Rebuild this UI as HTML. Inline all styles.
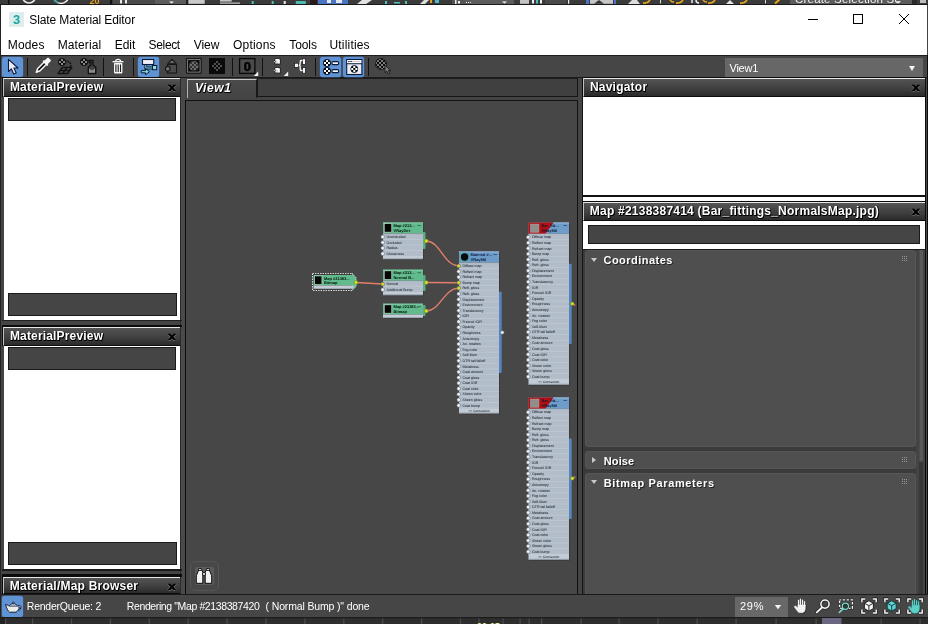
<!DOCTYPE html>
<html><head><meta charset="utf-8"><title>Slate Material Editor</title>
<style>
*{box-sizing:border-box;margin:0;padding:0}
html,body{width:928px;height:624px;overflow:hidden;background:#444}
body{position:relative;will-change:transform;font-family:"Liberation Sans",sans-serif;font-size:12px;color:#fff}
.abs,.abs>*{position:absolute}
svg{position:absolute;overflow:visible}
#nodes{filter:blur(.3px)}
#nodes text{font-family:"Liberation Sans",sans-serif;font-size:12px;text-rendering:geometricPrecision}
/* background app strips */
#topstrip{left:0;top:0;width:928px;height:5px;background:#3b3b3b;overflow:hidden}
#botstrip{left:0;top:617px;width:928px;height:7px;background:#2d2d2d;overflow:hidden}
#win{left:0;top:5px;width:928px;height:612px;background:#444;border-left:1px solid #222}
/* title + menu */
#title{left:1px;top:5px;width:926px;height:50px;background:#fff;color:#000}
#title span{white-space:nowrap;font-size:12px;line-height:14px}
#appicon{left:8px;top:7px;width:15px;height:15px;background:#dfeeed;color:#17a4a4;font-weight:bold;font-size:13px!important;line-height:15px!important;text-align:center}
#toolbar{left:1px;top:55px;width:927px;height:23px;background:#464646;border-top:1px solid #1e1e1e;border-bottom:1px solid #1a1a1a}
.sep{width:1px;height:18px;top:1.500px;background:#111}
.btn{width:21px;height:20px;top:0.500px;background:#6093d3;border-radius:2.500px;box-shadow:0 0 0 .5px #3c5c8c}
/* panel headers */
.hdr{position:absolute;height:19px;background:linear-gradient(#585858 0,#4f4f4f 12%,#404040 55%,#2b2b2b 100%);border-top:1px solid #e6e6e6;border-left:1px solid #c0c0c0;border-bottom:1px solid #0c0c0c;box-shadow:-1px 0 0 #0c0c0c,0 -1px 0 #0c0c0c}
.ht{position:absolute;top:80px;font-weight:bold;font-size:12px;line-height:14px;color:#fff;text-shadow:1px 1px 0 #000,0 1px 0 #000,1px 0 0 #222;white-space:nowrap}
.hx{position:absolute;font-weight:bold;font-size:11px;line-height:14px;color:#000;-webkit-text-stroke:.6px #000;transform:scaleX(1.27);transform-origin:0 50%;text-shadow:0 1px 0 #8a8a8a,1px 0 0 #666,-1px 0 0 #666}
.white{position:absolute;background:#fff}
.dk{position:absolute;background:#454545;border:1px solid #1a1a1a}
#canvas{left:185px;top:100px;width:393px;height:495px;background:#474747;border:1px solid #121212;border-left:1.600px solid #0c0c0c;overflow:hidden}
#status{left:1px;top:594px;width:927px;height:23px;background:#464646;border-top:1px solid #1a1a1a}
.st{position:absolute;white-space:nowrap;font-size:11px;line-height:14px;top:599px;color:#fff}
.roll{position:absolute;left:585px;width:331px;background:#4f4f4f;border:1px solid #575757;border-radius:3px}
.rt{position:absolute;font-weight:bold;font-size:11px;line-height:14px;color:#fff;text-shadow:1px 1px 0 #222;white-space:nowrap}
.tri{position:absolute;width:0;height:0;border:3.500px solid transparent}
.grip{position:absolute;left:902px;width:5px;height:5px;background:radial-gradient(circle at .5px .5px,#999 .55px,transparent .7px) 0 0/2px 2px}
#t0{left:28.3px!important;top:8px!important;letter-spacing:-0.11px}
#m1{left:6.8px!important;top:33px!important;letter-spacing:0.16px}
#m2{left:56.7px!important;top:33px!important;letter-spacing:0.12px}
#m3{left:113.7px!important;top:33px!important;letter-spacing:0px}
#m4{left:147.6px!important;top:33px!important;letter-spacing:-0.35px}
#m5{left:192.8px!important;top:33px!important;letter-spacing:-0.07px}
#m6{left:232.1px!important;top:33px!important;letter-spacing:0.17px}
#m7{left:288.3px!important;top:33px!important;letter-spacing:-0.1px}
#m8{left:328.5px!important;top:33px!important;letter-spacing:0.18px}
#h1{left:9.9px!important;top:80px!important;letter-spacing:0.17px}
#h2{left:9.9px!important;top:329px!important;letter-spacing:0.17px}
#h3{left:9.8px!important;top:579px!important;letter-spacing:0.22px}
#h4{left:194.9px!important;top:81px!important;letter-spacing:0.61px}
#h5{left:589.9px!important;top:80px!important;letter-spacing:0.23px}
#h6{left:589.8px!important;top:204px!important;letter-spacing:0.23px}
#s1{left:26.8px!important;top:599px!important;letter-spacing:-0.24px}
#s2{left:126.8px!important;top:599px!important;letter-spacing:-0.39px}
#s2b{left:265.6px!important;top:599px!important;letter-spacing:-0.15px}
#s3{left:739.9px!important;top:599px!important;letter-spacing:0.84px}
#dd1{left:729.5px!important;top:61px!important;letter-spacing:-0.24px}
#r1{left:603.5px!important;top:253px!important;letter-spacing:0.47px}
#r2{left:603.8px!important;top:454px!important;letter-spacing:0.11px}
#r3{left:603.8px!important;top:476px!important;letter-spacing:0.63px}
#x1{left:167.6px!important;top:79.7px!important;letter-spacing:0px}
#x2{left:167.6px!important;top:328.8px!important;letter-spacing:0px}
#x3{left:167.6px!important;top:578.5px!important;letter-spacing:0px}
#x5{left:912px!important;top:80px!important;letter-spacing:0px}
#x6{left:912px!important;top:204px!important;letter-spacing:0px}
</style></head><body>
<div id="topstrip" class="abs"><svg style="left:0;top:0" width="928" height="5" viewBox="0 0 928 5">
<rect x="8" y="0" width="1.5" height="5" fill="#111"/>
<rect x="110" y="0" width="2" height="5" fill="#111"/>
<rect x="113" y="0" width="42" height="5" fill="#4a4a4a"/>
<rect x="120" y="0" width="2" height="3.5" fill="#e8e8e8"/>
<rect x="125" y="0" width="2" height="3.5" fill="#e8e8e8"/>
<rect x="155" y="0" width="31" height="5" fill="#5c5c5c"/>
<rect x="186" y="0" width="2" height="5" fill="#222"/>
<rect x="188.4" y="0" width="16.3" height="3.8" fill="#c9c9c9"/>
<rect x="220" y="0" width="11.7" height="1.6" fill="#c4c4c4"/>
<rect x="220" y="2.6" width="20" height="1" fill="#e0e0e0"/>
<rect x="251.7" y="1" width="2" height="3" fill="#4fc0b8"/>
<rect x="271.7" y="1" width="2" height="3" fill="#4fc0b8"/>
<rect x="283.7" y="1" width="2" height="3" fill="#f0f0f0"/>
<rect x="295.8" y="1" width="10" height="3" fill="#4fb8b0"/>
<rect x="310" y="0" width="7" height="5" fill="#2a1a1a"/>
<rect x="318" y="0" width="30" height="5" fill="#4a74c4"/>
<rect x="327" y="0" width="4" height="3" fill="#e8e8f0"/>
<rect x="336" y="0" width="6" height="3" fill="#e8e8f0"/>
<rect x="385" y="1" width="2" height="3" fill="#4fc0b8"/>
<rect x="394" y="2" width="6" height="1.5" fill="#4fc0b8"/>
<rect x="405" y="1" width="2" height="3" fill="#4fc0b8"/>
<rect x="430" y="0" width="2" height="3" fill="#e8a020"/>
<rect x="435" y="0" width="4" height="3" fill="#4fb8c8"/>
<rect x="452" y="0" width="13" height="5" fill="#555"/>
<rect x="455" y="0" width="1.5" height="4" fill="#eee"/>
<rect x="458" y="1" width="2" height="2.5" fill="#eee"/>
<rect x="465" y="0" width="49" height="5" fill="#5c5c5c"/>
<rect x="466" y="2" width="1" height="1" fill="#eee"/>
<rect x="468" y="2" width="1" height="1" fill="#eee"/>
<rect x="470" y="2" width="1" height="1" fill="#eee"/>
<rect x="520" y="0" width="9" height="3.8" fill="#c4c4c4"/>
<rect x="532" y="0" width="2" height="3.5" fill="#f0f0f0"/>
<rect x="536" y="0" width="2" height="3.5" fill="#4fc0b8"/>
<rect x="540" y="0" width="2" height="3.5" fill="#f0f0f0"/>
<rect x="545" y="0" width="21" height="5" fill="#4a4a4a"/>
<rect x="568" y="0" width="1.2" height="3.8" fill="#f0f0f0"/>
<rect x="586" y="0" width="3" height="4" fill="#4a74c4"/>
<rect x="590" y="0" width="23" height="3.8" fill="#c6c6c6"/>
<rect x="614" y="0" width="2" height="4" fill="#4a74c4"/>
<rect x="660" y="0" width="1" height="3.5" fill="#ddd"/>
<rect x="765" y="0" width="1" height="3.5" fill="#ddd"/>
<rect x="790" y="0" width="122" height="5" fill="#5c5c5c"/>
<rect x="912" y="0" width="5" height="5" fill="#2a2a2a"/>
<rect x="920" y="0" width="6" height="3" fill="#bbb"/>
<circle cx="29" cy="-3.5" r="6.5" fill="none" stroke="#eee" stroke-width="1.6"/>
<circle cx="61" cy="-4" r="7.5" fill="none" stroke="#eee" stroke-width="1.6"/>
<path d="M53.500-2a7.500 7.500 0 0 0 5 5" fill="none" stroke="#3aa89a" stroke-width="1.800"/>
<text x="89.500" y="3.500" font-size="9" font-weight="bold" fill="#e8a020" font-family="Liberation Sans,sans-serif">20</text>
<path d="M169 1.600h5l-2.500 2z" fill="#f4f4f4"/>
<path d="M357 4l5-4h10l-6 4z" fill="#e4e4e4"/>
<path d="M420 4l4-4h5l-4 4z" fill="#ddd"/>
<path d="M502 1.600h5l-2.500 2z" fill="#f4f4f4"/>
<path d="M594 3.800l5-3.800 5 3.800z" fill="#333"/>
<path d="M628 4l4-4h5l3 4z" fill="#ddd"/>
<path d="M643 3.200c4 0 6.500-1.500 7-4" fill="none" stroke="#e8a81c" stroke-width="1.700"/>
<path d="M676 3.200c4 0 6.500-1.500 7-4" fill="none" stroke="#e8a81c" stroke-width="1.700"/>
<path d="M708 3.200c4 0 6.500-1.500 7-4" fill="none" stroke="#e8a81c" stroke-width="1.700"/>
<path d="M740 3.200c4 0 6.500-1.500 7-4" fill="none" stroke="#e8a81c" stroke-width="1.700"/>
<path d="M670 0c1 1.500 2.500 2 4 2M703 0c1 1.500 2.500 2 4 2" fill="none" stroke="#e8a81c" stroke-width="1.400"/>
<path d="M692 0v3M696 0c0 2 1 3 3 3" fill="none" stroke="#eee" stroke-width="1.500"/>
<path d="M726 4l4-4 4 4z" fill="#e4e4e4"/>
<path d="M775 3.500l4.500-4" stroke="#e8a81c" stroke-width="2"/>
<path d="M895 1.200h6l-3 2.400z" fill="#f4f4f4"/>
</svg>
<span style="left:795px;top:-8px;font-size:11.500px;line-height:14px;white-space:nowrap;color:#f0f0f0;letter-spacing:.2px">Create Selection Se</span>
<div style="left:0;top:4px;width:928px;height:1px;background:#1a1a1a"></div></div>
<div id="win" class="abs"></div>
<div id="title" class="abs">
<span id="appicon">3</span>
<span id="t0" style="left:29px;top:8px">Slate Material Editor</span>
<span id="m1" style="left:7px;top:33px">Modes</span>
<span id="m2" style="left:57px;top:33px">Material</span>
<span id="m3" style="left:114px;top:33px">Edit</span>
<span id="m4" style="left:148px;top:33px">Select</span>
<span id="m5" style="left:193px;top:33px">View</span>
<span id="m6" style="left:232px;top:33px">Options</span>
<span id="m7" style="left:288px;top:33px">Tools</span>
<span id="m8" style="left:329px;top:33px">Utilities</span>
<svg style="left:806px;top:8px" width="110" height="14" viewBox="0 0 110 14" fill="none" stroke="#000" stroke-width="1">
<path d="M1 6.5h10"/><rect x="46.5" y="1.500" width="9" height="9"/><path d="M92 1l10 10M102 1l-10 10"/></svg>
</div>
<div id="toolbar" class="abs">
<div class="btn" style="left:1px"></div>
<div class="sep" style="left:26px"></div>
<div class="sep" style="left:102px"></div>
<div class="sep" style="left:132px"></div>
<div class="btn" style="left:137px"></div>
<div class="sep" style="left:231px"></div>
<div class="sep" style="left:261px"></div>
<div class="sep" style="left:314px"></div>
<div class="btn" style="left:319px"></div>
<div class="btn" style="left:342px"></div>
<div class="sep" style="left:367px"></div>
<div style="left:724px;top:2px;width:198px;height:19px;background:#676767"></div>
<div class="tri" style="left:907.500px;top:9.500px;border-top:5px solid #f4f4f4;border-bottom:0"></div>
</div>
<span id="dd1" class="st" style="left:729px;top:61px;font-size:11px">View1</span>

<!-- left column -->
<div class="abs" style="left:181px;top:78px;width:4px;height:516px;background:#4a4a4a"></div>
<div class="abs" style="left:180px;top:78px;width:1.200px;height:516px;background:#2a2a2a"></div>
<div class="abs" style="left:2px;top:320px;width:180px;height:1px;background:#222"></div>
<div class="abs" style="left:2px;top:325px;width:180px;height:2px;background:#0a0a0a"></div>
<div class="abs" style="left:2px;top:569px;width:180px;height:1.500px;background:#1a1a1a"></div>
<div class="abs" style="left:2px;top:574px;width:180px;height:2.500px;background:#0a0a0a"></div>
<div class="hdr" style="left:3px;top:78px;width:177px"></div>
<span id="h1" class="ht" style="left:10px;top:80px">MaterialPreview</span>
<span id="x1" class="hx" style="left:168px;top:80px">x</span>
<div class="white" style="left:4px;top:97px;width:176px;height:223px"></div>
<div class="dk" style="left:8px;top:98px;width:168px;height:23px"></div>
<div class="dk" style="left:8px;top:293px;width:169px;height:23px"></div>

<div class="hdr" style="left:3px;top:327px;width:177px"></div>
<span id="h2" class="ht" style="left:10px;top:329px">MaterialPreview</span>
<span id="x2" class="hx" style="left:168px;top:329px">x</span>
<div class="white" style="left:4px;top:346px;width:176px;height:223px"></div>
<div class="dk" style="left:8px;top:347px;width:168px;height:23px"></div>
<div class="dk" style="left:8px;top:542px;width:169px;height:23px"></div>

<div class="hdr" style="left:3px;top:576.500px;width:177px;height:17.500px"></div>
<span id="h3" class="ht" style="left:10px;top:578px">Material/Map Browser</span>
<span id="x3" class="hx" style="left:168px;top:578px">x</span>

<!-- view -->
<div class="abs" style="left:257px;top:78px;width:321px;height:19px;background:#404040;border:1px solid #151515;border-top:1px solid #1e1e1e"></div>
<div class="abs" style="left:187px;top:79px;width:70px;height:19px;background:linear-gradient(#4a4a4a,#444);border-top:1px solid #c8c8c8;border-left:1px solid #b0b0b0;border-right:1px solid #1a1a1a"></div>
<span id="h4" class="ht" style="left:196px;top:81px;font-style:italic">View1</span>
<div id="canvas" class="abs"></div>
<svg id="nodes" style="left:0;top:0" width="928" height="624" viewBox="0 0 928 624">
<path d="M356 282.5 L382.5 284" fill="none" stroke="#e27f6c" stroke-width="1.4"/>
<path d="M426.3 241 C440 241,444 265.8,458.5 265.8" fill="none" stroke="#e27f6c" stroke-width="1.4"/>
<path d="M426.3 282.5 L458.500 282.7" fill="none" stroke="#e27f6c" stroke-width="1.4"/>
<path d="M426.3 311 C440 311,444 288.3,458.5 288.3" fill="none" stroke="#e27f6c" stroke-width="1.4"/>
<path d="M572.3 303.8 l3 1.5" fill="none" stroke="#e27f6c" stroke-width="1.4"/>
<path d="M572.3 478.4 l3 -1.5" fill="none" stroke="#e27f6c" stroke-width="1.4"/>
<rect x="312.5" y="273.5" width="40" height="17" fill="#3c3c3c" stroke="#f2f2f2" stroke-width=".9" stroke-dasharray="1.4 1.1"/>
<path d="M352 273.500 l4 4 v9 l-4 4" fill="#62bb8c" stroke="#f2f2f2" stroke-width=".9" stroke-dasharray="1.4 1.1"/>
<rect x="313.5" y="275" width="40" height="10.5" fill="#62bb8c" />
<rect x="314.7" y="276" width="7.2" height="8.3" fill="#050505" stroke="#d8e8e0" stroke-width=".5"/>
<text transform="translate(324 279.6) scale(0.33) rotate(.02)" fill="#04140c" font-weight="bold" >Map #21383...</text>
<text transform="translate(324 284.2) scale(0.33) rotate(.02)" fill="#04140c" font-weight="bold" >Bitmap</text>
<rect x="313.5" y="285.5" width="40" height="3.5" fill="#c3ccd6" />
<path d="M313.5 288.6h40" stroke="#8e99a5" stroke-width=".8"/>
<circle cx="356" cy="282.4" r="1.9" fill="#d2e22c" stroke="#6a7a20" stroke-width=".5"/>
<rect x="383.8" y="223.5" width="40" height="36.62" fill="#2f2f2f" opacity=".55"/>
<rect x="422.5" y="232" width="3" height="17" fill="#5aae83" rx="1"/>
<rect x="383" y="222.5" width="40" height="11" fill="#62bb8c" />
<path d="M383 222.9h40" stroke="#8fd4b0" stroke-width=".8"/>
<rect x="384.3" y="223.7" width="7.4" height="8.4" fill="#050505" stroke="#d8e8e0" stroke-width=".5"/>
<text transform="translate(393.5 227.2) scale(0.33) rotate(.02)" fill="#04140c" font-weight="bold" >Map #213...</text>
<text transform="translate(393.5 231.9) scale(0.33) rotate(.02)" fill="#04140c" font-weight="bold" >VRayDirt</text>
<path d="M417.5 225.5h3.500" stroke="#1d5a3c" stroke-width=".7"/>
<rect x="383" y="233.5" width="40" height="23.52" fill="#b2bdc9" />
<path d="M383 239.68h40" stroke="#cdd6df" stroke-width=".6"/>
<path d="M383 234.6h40" stroke="#aab6c3" stroke-width=".5"/>
<path d="M383 245.26h40" stroke="#cdd6df" stroke-width=".6"/>
<path d="M383 240.18h40" stroke="#aab6c3" stroke-width=".5"/>
<path d="M383 250.84h40" stroke="#cdd6df" stroke-width=".6"/>
<path d="M383 245.76h40" stroke="#aab6c3" stroke-width=".5"/>
<path d="M383 256.42h40" stroke="#cdd6df" stroke-width=".6"/>
<path d="M383 251.34h40" stroke="#aab6c3" stroke-width=".5"/>
<text transform="translate(386.4 238.09) scale(0.3) rotate(.02)" fill="#10161e" >Unoccluded</text>
<circle cx="382.7" cy="236.89" r="1.85" fill="#eef2f6" stroke="#4a545e" stroke-width=".5"/>
<text transform="translate(386.4 243.67) scale(0.3) rotate(.02)" fill="#10161e" >Occluded</text>
<circle cx="382.7" cy="242.47" r="1.85" fill="#eef2f6" stroke="#4a545e" stroke-width=".5"/>
<text transform="translate(386.4 249.25) scale(0.3) rotate(.02)" fill="#10161e" >Radius</text>
<circle cx="382.7" cy="248.05" r="1.85" fill="#eef2f6" stroke="#4a545e" stroke-width=".5"/>
<text transform="translate(386.4 254.83) scale(0.3) rotate(.02)" fill="#10161e" >Glossiness</text>
<circle cx="382.7" cy="253.63" r="1.85" fill="#eef2f6" stroke="#4a545e" stroke-width=".5"/>
<rect x="383" y="256.62" width="40" height="2.5" fill="#c3ccd6" />
<path d="M383 258.72h40" stroke="#8e99a5" stroke-width=".8"/>
<circle cx="426.3" cy="241" r="1.9" fill="#d2e22c" stroke="#6a7a20" stroke-width=".5"/>
<rect x="383.8" y="270.7" width="40" height="25.46" fill="#2f2f2f" opacity=".55"/>
<rect x="422.5" y="275" width="3" height="16" fill="#5aae83" rx="1"/>
<rect x="383" y="269.7" width="40" height="11" fill="#62bb8c" />
<path d="M383 270.1h40" stroke="#8fd4b0" stroke-width=".8"/>
<rect x="384.3" y="270.9" width="7.4" height="8.4" fill="#050505" stroke="#d8e8e0" stroke-width=".5"/>
<text transform="translate(393.5 274.4) scale(0.33) rotate(.02)" fill="#04140c" font-weight="bold" >Map #213...</text>
<text transform="translate(393.5 279.1) scale(0.33) rotate(.02)" fill="#04140c" font-weight="bold" >Normal B...</text>
<path d="M417.5 272.7h3.500" stroke="#1d5a3c" stroke-width=".7"/>
<rect x="383" y="280.7" width="40" height="12.36" fill="#b2bdc9" />
<path d="M383 286.88h40" stroke="#cdd6df" stroke-width=".6"/>
<path d="M383 281.8h40" stroke="#aab6c3" stroke-width=".5"/>
<path d="M383 292.46h40" stroke="#cdd6df" stroke-width=".6"/>
<path d="M383 287.38h40" stroke="#aab6c3" stroke-width=".5"/>
<text transform="translate(386.4 285.29) scale(0.3) rotate(.02)" fill="#10161e" >Normal</text>
<circle cx="382.7" cy="284.09" r="1.85" fill="#d2e22c" stroke="#4a545e" stroke-width=".5"/>
<text transform="translate(386.4 290.87) scale(0.3) rotate(.02)" fill="#10161e" >Additional Bump</text>
<circle cx="382.7" cy="289.67" r="1.85" fill="#eef2f6" stroke="#4a545e" stroke-width=".5"/>
<rect x="383" y="292.66" width="40" height="2.5" fill="#c3ccd6" />
<path d="M383 294.76h40" stroke="#8e99a5" stroke-width=".8"/>
<circle cx="426.3" cy="282.5" r="1.9" fill="#d2e22c" stroke="#6a7a20" stroke-width=".5"/>
<rect x="383.8" y="304.7" width="40" height="14.3" fill="#2f2f2f" opacity=".55"/>
<rect x="422.5" y="305" width="3" height="11" fill="#5aae83" rx="1"/>
<rect x="383" y="303.7" width="40" height="10.8" fill="#62bb8c" />
<path d="M383 304.1h40" stroke="#8fd4b0" stroke-width=".8"/>
<rect x="384.3" y="304.9" width="7.4" height="8.2" fill="#050505" stroke="#d8e8e0" stroke-width=".5"/>
<text transform="translate(393.5 308.4) scale(0.33) rotate(.02)" fill="#04140c" font-weight="bold" >Map #21383...</text>
<text transform="translate(393.5 313.1) scale(0.33) rotate(.02)" fill="#04140c" font-weight="bold" >Bitmap</text>
<path d="M417.5 306.7h3.500" stroke="#1d5a3c" stroke-width=".7"/>
<rect x="383" y="314.5" width="40" height="3.5" fill="#c3ccd6" />
<path d="M383 317.6h40" stroke="#8e99a5" stroke-width=".8"/>
<circle cx="426.3" cy="311" r="1.9" fill="#d2e22c" stroke="#6a7a20" stroke-width=".5"/>
<rect x="459.8" y="252.5" width="40" height="161.88" fill="#2f2f2f" opacity=".55"/>
<rect x="498.5" y="291.7" width="3.2" height="81.3" fill="#5586bb" rx="1"/>
<rect x="459" y="251.5" width="40" height="11" fill="#6d9ccb" />
<path d="M459 251.9h40" stroke="#a9c8e6" stroke-width=".8"/>
<rect x="460.3" y="252.7" width="8.6" height="8.6" fill="#4aa9a9" />
<circle cx="464.6" cy="257" r="3.7" fill="#0b0b0b"/>
<text transform="translate(470.5 256.2) scale(0.33) rotate(.02)" fill="#0a1c3a" font-weight="bold" >Material #...</text>
<text transform="translate(470.5 260.9) scale(0.33) rotate(.02)" fill="#0a1c3a" font-weight="bold" >VRayMtl</text>
<path d="M493.5 254.5h3.500" stroke="#1d3c6a" stroke-width=".7"/>
<rect x="459" y="262.5" width="40" height="146.28" fill="#b2bdc9" />
<path d="M459 268.68h40" stroke="#cdd6df" stroke-width=".6"/>
<path d="M459 263.6h40" stroke="#aab6c3" stroke-width=".5"/>
<path d="M459 274.26h40" stroke="#cdd6df" stroke-width=".6"/>
<path d="M459 269.18h40" stroke="#aab6c3" stroke-width=".5"/>
<path d="M459 279.84h40" stroke="#cdd6df" stroke-width=".6"/>
<path d="M459 274.76h40" stroke="#aab6c3" stroke-width=".5"/>
<path d="M459 285.42h40" stroke="#cdd6df" stroke-width=".6"/>
<path d="M459 280.34h40" stroke="#aab6c3" stroke-width=".5"/>
<path d="M459 291h40" stroke="#cdd6df" stroke-width=".6"/>
<path d="M459 285.92h40" stroke="#aab6c3" stroke-width=".5"/>
<path d="M459 296.58h40" stroke="#cdd6df" stroke-width=".6"/>
<path d="M459 291.5h40" stroke="#aab6c3" stroke-width=".5"/>
<path d="M459 302.16h40" stroke="#cdd6df" stroke-width=".6"/>
<path d="M459 297.08h40" stroke="#aab6c3" stroke-width=".5"/>
<path d="M459 307.74h40" stroke="#cdd6df" stroke-width=".6"/>
<path d="M459 302.66h40" stroke="#aab6c3" stroke-width=".5"/>
<path d="M459 313.32h40" stroke="#cdd6df" stroke-width=".6"/>
<path d="M459 308.24h40" stroke="#aab6c3" stroke-width=".5"/>
<path d="M459 318.9h40" stroke="#cdd6df" stroke-width=".6"/>
<path d="M459 313.82h40" stroke="#aab6c3" stroke-width=".5"/>
<path d="M459 324.48h40" stroke="#cdd6df" stroke-width=".6"/>
<path d="M459 319.4h40" stroke="#aab6c3" stroke-width=".5"/>
<path d="M459 330.06h40" stroke="#cdd6df" stroke-width=".6"/>
<path d="M459 324.98h40" stroke="#aab6c3" stroke-width=".5"/>
<path d="M459 335.64h40" stroke="#cdd6df" stroke-width=".6"/>
<path d="M459 330.56h40" stroke="#aab6c3" stroke-width=".5"/>
<path d="M459 341.22h40" stroke="#cdd6df" stroke-width=".6"/>
<path d="M459 336.14h40" stroke="#aab6c3" stroke-width=".5"/>
<path d="M459 346.8h40" stroke="#cdd6df" stroke-width=".6"/>
<path d="M459 341.72h40" stroke="#aab6c3" stroke-width=".5"/>
<path d="M459 352.38h40" stroke="#cdd6df" stroke-width=".6"/>
<path d="M459 347.3h40" stroke="#aab6c3" stroke-width=".5"/>
<path d="M459 357.96h40" stroke="#cdd6df" stroke-width=".6"/>
<path d="M459 352.88h40" stroke="#aab6c3" stroke-width=".5"/>
<path d="M459 363.54h40" stroke="#cdd6df" stroke-width=".6"/>
<path d="M459 358.46h40" stroke="#aab6c3" stroke-width=".5"/>
<path d="M459 369.12h40" stroke="#cdd6df" stroke-width=".6"/>
<path d="M459 364.04h40" stroke="#aab6c3" stroke-width=".5"/>
<path d="M459 374.7h40" stroke="#cdd6df" stroke-width=".6"/>
<path d="M459 369.62h40" stroke="#aab6c3" stroke-width=".5"/>
<path d="M459 380.28h40" stroke="#cdd6df" stroke-width=".6"/>
<path d="M459 375.2h40" stroke="#aab6c3" stroke-width=".5"/>
<path d="M459 385.86h40" stroke="#cdd6df" stroke-width=".6"/>
<path d="M459 380.78h40" stroke="#aab6c3" stroke-width=".5"/>
<path d="M459 391.44h40" stroke="#cdd6df" stroke-width=".6"/>
<path d="M459 386.36h40" stroke="#aab6c3" stroke-width=".5"/>
<path d="M459 397.02h40" stroke="#cdd6df" stroke-width=".6"/>
<path d="M459 391.94h40" stroke="#aab6c3" stroke-width=".5"/>
<path d="M459 402.6h40" stroke="#cdd6df" stroke-width=".6"/>
<path d="M459 397.52h40" stroke="#aab6c3" stroke-width=".5"/>
<path d="M459 408.18h40" stroke="#cdd6df" stroke-width=".6"/>
<path d="M459 403.1h40" stroke="#aab6c3" stroke-width=".5"/>
<text transform="translate(462.4 267.09) scale(0.3) rotate(.02)" fill="#10161e" >Diffuse map</text>
<circle cx="458.7" cy="265.89" r="1.85" fill="#d2e22c" stroke="#4a545e" stroke-width=".5"/>
<text transform="translate(462.4 272.67) scale(0.3) rotate(.02)" fill="#10161e" >Reflect map</text>
<circle cx="458.7" cy="271.47" r="1.85" fill="#eef2f6" stroke="#4a545e" stroke-width=".5"/>
<text transform="translate(462.4 278.25) scale(0.3) rotate(.02)" fill="#10161e" >Refract map</text>
<circle cx="458.7" cy="277.05" r="1.85" fill="#eef2f6" stroke="#4a545e" stroke-width=".5"/>
<text transform="translate(462.4 283.83) scale(0.3) rotate(.02)" fill="#10161e" >Bump map</text>
<circle cx="458.7" cy="282.63" r="1.85" fill="#d2e22c" stroke="#4a545e" stroke-width=".5"/>
<text transform="translate(462.4 289.41) scale(0.3) rotate(.02)" fill="#10161e" >Refl. gloss</text>
<circle cx="458.7" cy="288.21" r="1.85" fill="#d2e22c" stroke="#4a545e" stroke-width=".5"/>
<text transform="translate(462.4 294.99) scale(0.3) rotate(.02)" fill="#10161e" >Refr. gloss</text>
<circle cx="458.7" cy="293.79" r="1.85" fill="#eef2f6" stroke="#4a545e" stroke-width=".5"/>
<text transform="translate(462.4 300.57) scale(0.3) rotate(.02)" fill="#10161e" >Displacement</text>
<circle cx="458.7" cy="299.37" r="1.85" fill="#eef2f6" stroke="#4a545e" stroke-width=".5"/>
<text transform="translate(462.4 306.15) scale(0.3) rotate(.02)" fill="#10161e" >Environment</text>
<circle cx="458.7" cy="304.95" r="1.85" fill="#eef2f6" stroke="#4a545e" stroke-width=".5"/>
<text transform="translate(462.4 311.73) scale(0.3) rotate(.02)" fill="#10161e" >Translucency</text>
<circle cx="458.7" cy="310.53" r="1.85" fill="#eef2f6" stroke="#4a545e" stroke-width=".5"/>
<text transform="translate(462.4 317.31) scale(0.3) rotate(.02)" fill="#10161e" >IOR</text>
<circle cx="458.7" cy="316.11" r="1.85" fill="#eef2f6" stroke="#4a545e" stroke-width=".5"/>
<text transform="translate(462.4 322.89) scale(0.3) rotate(.02)" fill="#10161e" >Fresnel IOR</text>
<circle cx="458.7" cy="321.69" r="1.85" fill="#eef2f6" stroke="#4a545e" stroke-width=".5"/>
<text transform="translate(462.4 328.47) scale(0.3) rotate(.02)" fill="#10161e" >Opacity</text>
<circle cx="458.7" cy="327.27" r="1.85" fill="#eef2f6" stroke="#4a545e" stroke-width=".5"/>
<text transform="translate(462.4 334.05) scale(0.3) rotate(.02)" fill="#10161e" >Roughness</text>
<circle cx="458.7" cy="332.85" r="1.85" fill="#eef2f6" stroke="#4a545e" stroke-width=".5"/>
<text transform="translate(462.4 339.63) scale(0.3) rotate(.02)" fill="#10161e" >Anisotropy</text>
<circle cx="458.7" cy="338.43" r="1.85" fill="#eef2f6" stroke="#4a545e" stroke-width=".5"/>
<text transform="translate(462.4 345.21) scale(0.3) rotate(.02)" fill="#10161e" >An. rotation</text>
<circle cx="458.7" cy="344.01" r="1.85" fill="#eef2f6" stroke="#4a545e" stroke-width=".5"/>
<text transform="translate(462.4 350.79) scale(0.3) rotate(.02)" fill="#10161e" >Fog color</text>
<circle cx="458.7" cy="349.59" r="1.85" fill="#eef2f6" stroke="#4a545e" stroke-width=".5"/>
<text transform="translate(462.4 356.37) scale(0.3) rotate(.02)" fill="#10161e" >Self-illum</text>
<circle cx="458.7" cy="355.17" r="1.85" fill="#eef2f6" stroke="#4a545e" stroke-width=".5"/>
<text transform="translate(462.4 361.95) scale(0.3) rotate(.02)" fill="#10161e" >GTR tail falloff</text>
<circle cx="458.7" cy="360.75" r="1.85" fill="#eef2f6" stroke="#4a545e" stroke-width=".5"/>
<text transform="translate(462.4 367.53) scale(0.3) rotate(.02)" fill="#10161e" >Metalness</text>
<circle cx="458.7" cy="366.33" r="1.85" fill="#eef2f6" stroke="#4a545e" stroke-width=".5"/>
<text transform="translate(462.4 373.11) scale(0.3) rotate(.02)" fill="#10161e" >Coat amount</text>
<circle cx="458.7" cy="371.91" r="1.85" fill="#eef2f6" stroke="#4a545e" stroke-width=".5"/>
<text transform="translate(462.4 378.69) scale(0.3) rotate(.02)" fill="#10161e" >Coat gloss</text>
<circle cx="458.7" cy="377.49" r="1.85" fill="#eef2f6" stroke="#4a545e" stroke-width=".5"/>
<text transform="translate(462.4 384.27) scale(0.3) rotate(.02)" fill="#10161e" >Coat IOR</text>
<circle cx="458.7" cy="383.07" r="1.85" fill="#eef2f6" stroke="#4a545e" stroke-width=".5"/>
<text transform="translate(462.4 389.85) scale(0.3) rotate(.02)" fill="#10161e" >Coat color</text>
<circle cx="458.7" cy="388.65" r="1.85" fill="#eef2f6" stroke="#4a545e" stroke-width=".5"/>
<text transform="translate(462.4 395.43) scale(0.3) rotate(.02)" fill="#10161e" >Sheen color</text>
<circle cx="458.7" cy="394.23" r="1.85" fill="#eef2f6" stroke="#4a545e" stroke-width=".5"/>
<text transform="translate(462.4 401.01) scale(0.3) rotate(.02)" fill="#10161e" >Sheen gloss</text>
<circle cx="458.7" cy="399.81" r="1.85" fill="#eef2f6" stroke="#4a545e" stroke-width=".5"/>
<text transform="translate(462.4 406.59) scale(0.3) rotate(.02)" fill="#10161e" >Coat bump</text>
<circle cx="458.7" cy="405.39" r="1.85" fill="#eef2f6" stroke="#4a545e" stroke-width=".5"/>
<rect x="459" y="408.38" width="40" height="5" fill="#c3ccd6" />
<path d="M459 412.98h40" stroke="#8e99a5" stroke-width=".8"/>
<text transform="translate(479 412.08) scale(0.27) rotate(.02)" fill="#10161e" text-anchor="middle">&lt;&lt; Connection</text>
<circle cx="502.3" cy="332.5" r="1.8" fill="#eef2f6" stroke="#5b6570" stroke-width=".5"/>
<rect x="529.3" y="223.5" width="40.5" height="162.18" fill="#2f2f2f" opacity=".55"/>
<rect x="568.5" y="263.8" width="3.2" height="80.2" fill="#5586bb" rx="1"/>
<rect x="528.5" y="222.5" width="40.5" height="11.3" fill="#6f9dc9" />
<path d="M528.5 222.5h25l-8 11.3h-17z" fill="#b30f12"/>
<path d="M553.5 222.9h15.5" stroke="#a9c8e6" stroke-width=".8"/>
<rect x="530.5" y="224.1" width="8.4" height="8.1" fill="#8e8e8e" stroke="#b8b0a8" stroke-width=".5"/>
<text transform="translate(541.5 227.2) scale(0.33) rotate(.02)" fill="#0a1c3a" font-weight="bold" >Bar_fitt...</text>
<text transform="translate(541.5 231.9) scale(0.33) rotate(.02)" fill="#0a1c3a" font-weight="bold" >VRayMtl</text>
<path d="M563.5 225.5h3.500" stroke="#1d3c6a" stroke-width=".7"/>
<rect x="528.5" y="233.8" width="40.5" height="146.28" fill="#b2bdc9" />
<path d="M528.5 239.98h40.5" stroke="#cdd6df" stroke-width=".6"/>
<path d="M528.5 234.9h40.5" stroke="#aab6c3" stroke-width=".5"/>
<path d="M528.5 245.56h40.5" stroke="#cdd6df" stroke-width=".6"/>
<path d="M528.5 240.48h40.5" stroke="#aab6c3" stroke-width=".5"/>
<path d="M528.5 251.14h40.5" stroke="#cdd6df" stroke-width=".6"/>
<path d="M528.5 246.06h40.5" stroke="#aab6c3" stroke-width=".5"/>
<path d="M528.5 256.72h40.5" stroke="#cdd6df" stroke-width=".6"/>
<path d="M528.5 251.64h40.5" stroke="#aab6c3" stroke-width=".5"/>
<path d="M528.5 262.3h40.5" stroke="#cdd6df" stroke-width=".6"/>
<path d="M528.5 257.22h40.5" stroke="#aab6c3" stroke-width=".5"/>
<path d="M528.5 267.88h40.5" stroke="#cdd6df" stroke-width=".6"/>
<path d="M528.5 262.8h40.5" stroke="#aab6c3" stroke-width=".5"/>
<path d="M528.5 273.46h40.5" stroke="#cdd6df" stroke-width=".6"/>
<path d="M528.5 268.38h40.5" stroke="#aab6c3" stroke-width=".5"/>
<path d="M528.5 279.04h40.5" stroke="#cdd6df" stroke-width=".6"/>
<path d="M528.5 273.96h40.5" stroke="#aab6c3" stroke-width=".5"/>
<path d="M528.5 284.62h40.5" stroke="#cdd6df" stroke-width=".6"/>
<path d="M528.5 279.54h40.5" stroke="#aab6c3" stroke-width=".5"/>
<path d="M528.5 290.2h40.5" stroke="#cdd6df" stroke-width=".6"/>
<path d="M528.5 285.12h40.5" stroke="#aab6c3" stroke-width=".5"/>
<path d="M528.5 295.78h40.5" stroke="#cdd6df" stroke-width=".6"/>
<path d="M528.5 290.7h40.5" stroke="#aab6c3" stroke-width=".5"/>
<path d="M528.5 301.36h40.5" stroke="#cdd6df" stroke-width=".6"/>
<path d="M528.5 296.28h40.5" stroke="#aab6c3" stroke-width=".5"/>
<path d="M528.5 306.94h40.5" stroke="#cdd6df" stroke-width=".6"/>
<path d="M528.5 301.86h40.5" stroke="#aab6c3" stroke-width=".5"/>
<path d="M528.5 312.52h40.5" stroke="#cdd6df" stroke-width=".6"/>
<path d="M528.5 307.44h40.5" stroke="#aab6c3" stroke-width=".5"/>
<path d="M528.5 318.1h40.5" stroke="#cdd6df" stroke-width=".6"/>
<path d="M528.5 313.02h40.5" stroke="#aab6c3" stroke-width=".5"/>
<path d="M528.5 323.68h40.5" stroke="#cdd6df" stroke-width=".6"/>
<path d="M528.5 318.6h40.5" stroke="#aab6c3" stroke-width=".5"/>
<path d="M528.5 329.26h40.5" stroke="#cdd6df" stroke-width=".6"/>
<path d="M528.5 324.18h40.5" stroke="#aab6c3" stroke-width=".5"/>
<path d="M528.5 334.84h40.5" stroke="#cdd6df" stroke-width=".6"/>
<path d="M528.5 329.76h40.5" stroke="#aab6c3" stroke-width=".5"/>
<path d="M528.5 340.42h40.5" stroke="#cdd6df" stroke-width=".6"/>
<path d="M528.5 335.34h40.5" stroke="#aab6c3" stroke-width=".5"/>
<path d="M528.5 346h40.5" stroke="#cdd6df" stroke-width=".6"/>
<path d="M528.5 340.92h40.5" stroke="#aab6c3" stroke-width=".5"/>
<path d="M528.5 351.58h40.5" stroke="#cdd6df" stroke-width=".6"/>
<path d="M528.5 346.5h40.5" stroke="#aab6c3" stroke-width=".5"/>
<path d="M528.5 357.16h40.5" stroke="#cdd6df" stroke-width=".6"/>
<path d="M528.5 352.08h40.5" stroke="#aab6c3" stroke-width=".5"/>
<path d="M528.5 362.74h40.5" stroke="#cdd6df" stroke-width=".6"/>
<path d="M528.5 357.66h40.5" stroke="#aab6c3" stroke-width=".5"/>
<path d="M528.5 368.32h40.5" stroke="#cdd6df" stroke-width=".6"/>
<path d="M528.5 363.24h40.5" stroke="#aab6c3" stroke-width=".5"/>
<path d="M528.5 373.9h40.5" stroke="#cdd6df" stroke-width=".6"/>
<path d="M528.5 368.82h40.5" stroke="#aab6c3" stroke-width=".5"/>
<path d="M528.5 379.48h40.5" stroke="#cdd6df" stroke-width=".6"/>
<path d="M528.5 374.4h40.5" stroke="#aab6c3" stroke-width=".5"/>
<text transform="translate(531.9 238.39) scale(0.3) rotate(.02)" fill="#10161e" >Diffuse map</text>
<circle cx="528.2" cy="237.19" r="1.85" fill="#eef2f6" stroke="#4a545e" stroke-width=".5"/>
<text transform="translate(531.9 243.97) scale(0.3) rotate(.02)" fill="#10161e" >Reflect map</text>
<circle cx="528.2" cy="242.77" r="1.85" fill="#eef2f6" stroke="#4a545e" stroke-width=".5"/>
<text transform="translate(531.9 249.55) scale(0.3) rotate(.02)" fill="#10161e" >Refract map</text>
<circle cx="528.2" cy="248.35" r="1.85" fill="#eef2f6" stroke="#4a545e" stroke-width=".5"/>
<text transform="translate(531.9 255.13) scale(0.3) rotate(.02)" fill="#10161e" >Bump map</text>
<circle cx="528.2" cy="253.93" r="1.85" fill="#eef2f6" stroke="#4a545e" stroke-width=".5"/>
<text transform="translate(531.9 260.71) scale(0.3) rotate(.02)" fill="#10161e" >Refl. gloss</text>
<circle cx="528.2" cy="259.51" r="1.85" fill="#eef2f6" stroke="#4a545e" stroke-width=".5"/>
<text transform="translate(531.9 266.29) scale(0.3) rotate(.02)" fill="#10161e" >Refr. gloss</text>
<circle cx="528.2" cy="265.09" r="1.85" fill="#eef2f6" stroke="#4a545e" stroke-width=".5"/>
<text transform="translate(531.9 271.87) scale(0.3) rotate(.02)" fill="#10161e" >Displacement</text>
<circle cx="528.2" cy="270.67" r="1.85" fill="#eef2f6" stroke="#4a545e" stroke-width=".5"/>
<text transform="translate(531.9 277.45) scale(0.3) rotate(.02)" fill="#10161e" >Environment</text>
<circle cx="528.2" cy="276.25" r="1.85" fill="#eef2f6" stroke="#4a545e" stroke-width=".5"/>
<text transform="translate(531.9 283.03) scale(0.3) rotate(.02)" fill="#10161e" >Translucency</text>
<circle cx="528.2" cy="281.83" r="1.85" fill="#eef2f6" stroke="#4a545e" stroke-width=".5"/>
<text transform="translate(531.9 288.61) scale(0.3) rotate(.02)" fill="#10161e" >IOR</text>
<circle cx="528.2" cy="287.41" r="1.85" fill="#eef2f6" stroke="#4a545e" stroke-width=".5"/>
<text transform="translate(531.9 294.19) scale(0.3) rotate(.02)" fill="#10161e" >Fresnel IOR</text>
<circle cx="528.2" cy="292.99" r="1.85" fill="#eef2f6" stroke="#4a545e" stroke-width=".5"/>
<text transform="translate(531.9 299.77) scale(0.3) rotate(.02)" fill="#10161e" >Opacity</text>
<circle cx="528.2" cy="298.57" r="1.85" fill="#eef2f6" stroke="#4a545e" stroke-width=".5"/>
<text transform="translate(531.9 305.35) scale(0.3) rotate(.02)" fill="#10161e" >Roughness</text>
<circle cx="528.2" cy="304.15" r="1.85" fill="#eef2f6" stroke="#4a545e" stroke-width=".5"/>
<text transform="translate(531.9 310.93) scale(0.3) rotate(.02)" fill="#10161e" >Anisotropy</text>
<circle cx="528.2" cy="309.73" r="1.85" fill="#eef2f6" stroke="#4a545e" stroke-width=".5"/>
<text transform="translate(531.9 316.51) scale(0.3) rotate(.02)" fill="#10161e" >An. rotation</text>
<circle cx="528.2" cy="315.31" r="1.85" fill="#eef2f6" stroke="#4a545e" stroke-width=".5"/>
<text transform="translate(531.9 322.09) scale(0.3) rotate(.02)" fill="#10161e" >Fog color</text>
<circle cx="528.2" cy="320.89" r="1.85" fill="#eef2f6" stroke="#4a545e" stroke-width=".5"/>
<text transform="translate(531.9 327.67) scale(0.3) rotate(.02)" fill="#10161e" >Self-illum</text>
<circle cx="528.2" cy="326.47" r="1.85" fill="#eef2f6" stroke="#4a545e" stroke-width=".5"/>
<text transform="translate(531.9 333.25) scale(0.3) rotate(.02)" fill="#10161e" >GTR tail falloff</text>
<circle cx="528.2" cy="332.05" r="1.85" fill="#eef2f6" stroke="#4a545e" stroke-width=".5"/>
<text transform="translate(531.9 338.83) scale(0.3) rotate(.02)" fill="#10161e" >Metalness</text>
<circle cx="528.2" cy="337.63" r="1.85" fill="#eef2f6" stroke="#4a545e" stroke-width=".5"/>
<text transform="translate(531.9 344.41) scale(0.3) rotate(.02)" fill="#10161e" >Coat amount</text>
<circle cx="528.2" cy="343.21" r="1.85" fill="#eef2f6" stroke="#4a545e" stroke-width=".5"/>
<text transform="translate(531.9 349.99) scale(0.3) rotate(.02)" fill="#10161e" >Coat gloss</text>
<circle cx="528.2" cy="348.79" r="1.85" fill="#eef2f6" stroke="#4a545e" stroke-width=".5"/>
<text transform="translate(531.9 355.57) scale(0.3) rotate(.02)" fill="#10161e" >Coat IOR</text>
<circle cx="528.2" cy="354.37" r="1.85" fill="#eef2f6" stroke="#4a545e" stroke-width=".5"/>
<text transform="translate(531.9 361.15) scale(0.3) rotate(.02)" fill="#10161e" >Coat color</text>
<circle cx="528.2" cy="359.95" r="1.85" fill="#eef2f6" stroke="#4a545e" stroke-width=".5"/>
<text transform="translate(531.9 366.73) scale(0.3) rotate(.02)" fill="#10161e" >Sheen color</text>
<circle cx="528.2" cy="365.53" r="1.85" fill="#eef2f6" stroke="#4a545e" stroke-width=".5"/>
<text transform="translate(531.9 372.31) scale(0.3) rotate(.02)" fill="#10161e" >Sheen gloss</text>
<circle cx="528.2" cy="371.11" r="1.85" fill="#eef2f6" stroke="#4a545e" stroke-width=".5"/>
<text transform="translate(531.9 377.89) scale(0.3) rotate(.02)" fill="#10161e" >Coat bump</text>
<circle cx="528.2" cy="376.69" r="1.85" fill="#eef2f6" stroke="#4a545e" stroke-width=".5"/>
<rect x="528.5" y="379.68" width="40.5" height="5" fill="#c3ccd6" />
<path d="M528.5 384.28h40.5" stroke="#8e99a5" stroke-width=".8"/>
<text transform="translate(548.75 383.38) scale(0.27) rotate(.02)" fill="#10161e" text-anchor="middle">&lt;&lt; Connection</text>
<circle cx="572.3" cy="303.8" r="1.8" fill="#d2e22c" stroke="#6a7a20" stroke-width=".5"/>
<rect x="529.3" y="398.5" width="40.5" height="162.18" fill="#2f2f2f" opacity=".55"/>
<rect x="568.5" y="438.5" width="3.2" height="80.5" fill="#5586bb" rx="1"/>
<rect x="528.5" y="397.5" width="40.5" height="11.3" fill="#6f9dc9" />
<path d="M528.5 397.5h25l-8 11.3h-17z" fill="#b30f12"/>
<path d="M553.5 397.9h15.5" stroke="#a9c8e6" stroke-width=".8"/>
<rect x="530.5" y="399.1" width="8.4" height="8.1" fill="#8e8e8e" stroke="#b8b0a8" stroke-width=".5"/>
<text transform="translate(541.5 402.2) scale(0.33) rotate(.02)" fill="#0a1c3a" font-weight="bold" >Bar_fitt...</text>
<text transform="translate(541.5 406.9) scale(0.33) rotate(.02)" fill="#0a1c3a" font-weight="bold" >VRayMtl</text>
<path d="M563.5 400.5h3.500" stroke="#1d3c6a" stroke-width=".7"/>
<rect x="528.5" y="408.8" width="40.5" height="146.28" fill="#b2bdc9" />
<path d="M528.5 414.98h40.5" stroke="#cdd6df" stroke-width=".6"/>
<path d="M528.5 409.9h40.5" stroke="#aab6c3" stroke-width=".5"/>
<path d="M528.5 420.56h40.5" stroke="#cdd6df" stroke-width=".6"/>
<path d="M528.5 415.48h40.5" stroke="#aab6c3" stroke-width=".5"/>
<path d="M528.5 426.14h40.5" stroke="#cdd6df" stroke-width=".6"/>
<path d="M528.5 421.06h40.5" stroke="#aab6c3" stroke-width=".5"/>
<path d="M528.5 431.72h40.5" stroke="#cdd6df" stroke-width=".6"/>
<path d="M528.5 426.64h40.5" stroke="#aab6c3" stroke-width=".5"/>
<path d="M528.5 437.3h40.5" stroke="#cdd6df" stroke-width=".6"/>
<path d="M528.5 432.22h40.5" stroke="#aab6c3" stroke-width=".5"/>
<path d="M528.5 442.88h40.5" stroke="#cdd6df" stroke-width=".6"/>
<path d="M528.5 437.8h40.5" stroke="#aab6c3" stroke-width=".5"/>
<path d="M528.5 448.46h40.5" stroke="#cdd6df" stroke-width=".6"/>
<path d="M528.5 443.38h40.5" stroke="#aab6c3" stroke-width=".5"/>
<path d="M528.5 454.04h40.5" stroke="#cdd6df" stroke-width=".6"/>
<path d="M528.5 448.96h40.5" stroke="#aab6c3" stroke-width=".5"/>
<path d="M528.5 459.62h40.5" stroke="#cdd6df" stroke-width=".6"/>
<path d="M528.5 454.54h40.5" stroke="#aab6c3" stroke-width=".5"/>
<path d="M528.5 465.2h40.5" stroke="#cdd6df" stroke-width=".6"/>
<path d="M528.5 460.12h40.5" stroke="#aab6c3" stroke-width=".5"/>
<path d="M528.5 470.78h40.5" stroke="#cdd6df" stroke-width=".6"/>
<path d="M528.5 465.7h40.5" stroke="#aab6c3" stroke-width=".5"/>
<path d="M528.5 476.36h40.5" stroke="#cdd6df" stroke-width=".6"/>
<path d="M528.5 471.28h40.5" stroke="#aab6c3" stroke-width=".5"/>
<path d="M528.5 481.94h40.5" stroke="#cdd6df" stroke-width=".6"/>
<path d="M528.5 476.86h40.5" stroke="#aab6c3" stroke-width=".5"/>
<path d="M528.5 487.52h40.5" stroke="#cdd6df" stroke-width=".6"/>
<path d="M528.5 482.44h40.5" stroke="#aab6c3" stroke-width=".5"/>
<path d="M528.5 493.1h40.5" stroke="#cdd6df" stroke-width=".6"/>
<path d="M528.5 488.02h40.5" stroke="#aab6c3" stroke-width=".5"/>
<path d="M528.5 498.68h40.5" stroke="#cdd6df" stroke-width=".6"/>
<path d="M528.5 493.6h40.5" stroke="#aab6c3" stroke-width=".5"/>
<path d="M528.5 504.26h40.5" stroke="#cdd6df" stroke-width=".6"/>
<path d="M528.5 499.18h40.5" stroke="#aab6c3" stroke-width=".5"/>
<path d="M528.5 509.84h40.5" stroke="#cdd6df" stroke-width=".6"/>
<path d="M528.5 504.76h40.5" stroke="#aab6c3" stroke-width=".5"/>
<path d="M528.5 515.42h40.5" stroke="#cdd6df" stroke-width=".6"/>
<path d="M528.5 510.34h40.5" stroke="#aab6c3" stroke-width=".5"/>
<path d="M528.5 521h40.5" stroke="#cdd6df" stroke-width=".6"/>
<path d="M528.5 515.92h40.5" stroke="#aab6c3" stroke-width=".5"/>
<path d="M528.5 526.58h40.5" stroke="#cdd6df" stroke-width=".6"/>
<path d="M528.5 521.5h40.5" stroke="#aab6c3" stroke-width=".5"/>
<path d="M528.5 532.16h40.5" stroke="#cdd6df" stroke-width=".6"/>
<path d="M528.5 527.08h40.5" stroke="#aab6c3" stroke-width=".5"/>
<path d="M528.5 537.74h40.5" stroke="#cdd6df" stroke-width=".6"/>
<path d="M528.5 532.66h40.5" stroke="#aab6c3" stroke-width=".5"/>
<path d="M528.5 543.32h40.5" stroke="#cdd6df" stroke-width=".6"/>
<path d="M528.5 538.24h40.5" stroke="#aab6c3" stroke-width=".5"/>
<path d="M528.5 548.9h40.5" stroke="#cdd6df" stroke-width=".6"/>
<path d="M528.5 543.82h40.5" stroke="#aab6c3" stroke-width=".5"/>
<path d="M528.5 554.48h40.5" stroke="#cdd6df" stroke-width=".6"/>
<path d="M528.5 549.4h40.5" stroke="#aab6c3" stroke-width=".5"/>
<text transform="translate(531.9 413.39) scale(0.3) rotate(.02)" fill="#10161e" >Diffuse map</text>
<circle cx="528.2" cy="412.19" r="1.85" fill="#eef2f6" stroke="#4a545e" stroke-width=".5"/>
<text transform="translate(531.9 418.97) scale(0.3) rotate(.02)" fill="#10161e" >Reflect map</text>
<circle cx="528.2" cy="417.77" r="1.85" fill="#eef2f6" stroke="#4a545e" stroke-width=".5"/>
<text transform="translate(531.9 424.55) scale(0.3) rotate(.02)" fill="#10161e" >Refract map</text>
<circle cx="528.2" cy="423.35" r="1.85" fill="#eef2f6" stroke="#4a545e" stroke-width=".5"/>
<text transform="translate(531.9 430.13) scale(0.3) rotate(.02)" fill="#10161e" >Bump map</text>
<circle cx="528.2" cy="428.93" r="1.85" fill="#eef2f6" stroke="#4a545e" stroke-width=".5"/>
<text transform="translate(531.9 435.71) scale(0.3) rotate(.02)" fill="#10161e" >Refl. gloss</text>
<circle cx="528.2" cy="434.51" r="1.85" fill="#eef2f6" stroke="#4a545e" stroke-width=".5"/>
<text transform="translate(531.9 441.29) scale(0.3) rotate(.02)" fill="#10161e" >Refr. gloss</text>
<circle cx="528.2" cy="440.09" r="1.85" fill="#eef2f6" stroke="#4a545e" stroke-width=".5"/>
<text transform="translate(531.9 446.87) scale(0.3) rotate(.02)" fill="#10161e" >Displacement</text>
<circle cx="528.2" cy="445.67" r="1.85" fill="#eef2f6" stroke="#4a545e" stroke-width=".5"/>
<text transform="translate(531.9 452.45) scale(0.3) rotate(.02)" fill="#10161e" >Environment</text>
<circle cx="528.2" cy="451.25" r="1.85" fill="#eef2f6" stroke="#4a545e" stroke-width=".5"/>
<text transform="translate(531.9 458.03) scale(0.3) rotate(.02)" fill="#10161e" >Translucency</text>
<circle cx="528.2" cy="456.83" r="1.85" fill="#eef2f6" stroke="#4a545e" stroke-width=".5"/>
<text transform="translate(531.9 463.61) scale(0.3) rotate(.02)" fill="#10161e" >IOR</text>
<circle cx="528.2" cy="462.41" r="1.85" fill="#eef2f6" stroke="#4a545e" stroke-width=".5"/>
<text transform="translate(531.9 469.19) scale(0.3) rotate(.02)" fill="#10161e" >Fresnel IOR</text>
<circle cx="528.2" cy="467.99" r="1.85" fill="#eef2f6" stroke="#4a545e" stroke-width=".5"/>
<text transform="translate(531.9 474.77) scale(0.3) rotate(.02)" fill="#10161e" >Opacity</text>
<circle cx="528.2" cy="473.57" r="1.85" fill="#eef2f6" stroke="#4a545e" stroke-width=".5"/>
<text transform="translate(531.9 480.35) scale(0.3) rotate(.02)" fill="#10161e" >Roughness</text>
<circle cx="528.2" cy="479.15" r="1.85" fill="#eef2f6" stroke="#4a545e" stroke-width=".5"/>
<text transform="translate(531.9 485.93) scale(0.3) rotate(.02)" fill="#10161e" >Anisotropy</text>
<circle cx="528.2" cy="484.73" r="1.85" fill="#eef2f6" stroke="#4a545e" stroke-width=".5"/>
<text transform="translate(531.9 491.51) scale(0.3) rotate(.02)" fill="#10161e" >An. rotation</text>
<circle cx="528.2" cy="490.31" r="1.85" fill="#eef2f6" stroke="#4a545e" stroke-width=".5"/>
<text transform="translate(531.9 497.09) scale(0.3) rotate(.02)" fill="#10161e" >Fog color</text>
<circle cx="528.2" cy="495.89" r="1.85" fill="#eef2f6" stroke="#4a545e" stroke-width=".5"/>
<text transform="translate(531.9 502.67) scale(0.3) rotate(.02)" fill="#10161e" >Self-illum</text>
<circle cx="528.2" cy="501.47" r="1.85" fill="#eef2f6" stroke="#4a545e" stroke-width=".5"/>
<text transform="translate(531.9 508.25) scale(0.3) rotate(.02)" fill="#10161e" >GTR tail falloff</text>
<circle cx="528.2" cy="507.05" r="1.85" fill="#eef2f6" stroke="#4a545e" stroke-width=".5"/>
<text transform="translate(531.9 513.83) scale(0.3) rotate(.02)" fill="#10161e" >Metalness</text>
<circle cx="528.2" cy="512.63" r="1.85" fill="#eef2f6" stroke="#4a545e" stroke-width=".5"/>
<text transform="translate(531.9 519.41) scale(0.3) rotate(.02)" fill="#10161e" >Coat amount</text>
<circle cx="528.2" cy="518.21" r="1.85" fill="#eef2f6" stroke="#4a545e" stroke-width=".5"/>
<text transform="translate(531.9 524.99) scale(0.3) rotate(.02)" fill="#10161e" >Coat gloss</text>
<circle cx="528.2" cy="523.79" r="1.85" fill="#eef2f6" stroke="#4a545e" stroke-width=".5"/>
<text transform="translate(531.9 530.57) scale(0.3) rotate(.02)" fill="#10161e" >Coat IOR</text>
<circle cx="528.2" cy="529.37" r="1.85" fill="#eef2f6" stroke="#4a545e" stroke-width=".5"/>
<text transform="translate(531.9 536.15) scale(0.3) rotate(.02)" fill="#10161e" >Coat color</text>
<circle cx="528.2" cy="534.95" r="1.85" fill="#eef2f6" stroke="#4a545e" stroke-width=".5"/>
<text transform="translate(531.9 541.73) scale(0.3) rotate(.02)" fill="#10161e" >Sheen color</text>
<circle cx="528.2" cy="540.53" r="1.85" fill="#eef2f6" stroke="#4a545e" stroke-width=".5"/>
<text transform="translate(531.9 547.31) scale(0.3) rotate(.02)" fill="#10161e" >Sheen gloss</text>
<circle cx="528.2" cy="546.11" r="1.85" fill="#eef2f6" stroke="#4a545e" stroke-width=".5"/>
<text transform="translate(531.9 552.89) scale(0.3) rotate(.02)" fill="#10161e" >Coat bump</text>
<circle cx="528.2" cy="551.69" r="1.85" fill="#eef2f6" stroke="#4a545e" stroke-width=".5"/>
<rect x="528.5" y="554.68" width="40.5" height="5" fill="#c3ccd6" />
<path d="M528.5 559.28h40.5" stroke="#8e99a5" stroke-width=".8"/>
<text transform="translate(548.75 558.38) scale(0.27) rotate(.02)" fill="#10161e" text-anchor="middle">&lt;&lt; Connection</text>
<circle cx="572.3" cy="478.4" r="1.8" fill="#d2e22c" stroke="#6a7a20" stroke-width=".5"/>
</svg>
<div class="abs" style="left:189.500px;top:561px;width:29.500px;height:29.500px;border:1px solid #565656;border-radius:5px;background:#484848"></div>
<div class="abs" style="left:194.500px;top:566.500px;width:19px;height:18.500px;border-radius:2px;background:#5c5c5c"></div>
<svg style="left:0;top:0" width="928" height="624" viewBox="0 0 928 624">
<g fill="#f2f2f2" stroke="#0c0c0c" stroke-width="1" stroke-linejoin="round">
<path d="M198.600 570h3.200l1 2.500v10.800h-6.500v-7.500z"/>
<path d="M209.400 570h-3.200l-1 2.500v10.800h6.500v-7.500z"/>
<rect x="198.500" y="568.500" width="3.200" height="1.800" rx=".8"/>
<rect x="206.300" y="568.500" width="3.200" height="1.800" rx=".8"/>
<rect x="202.700" y="572.500" width="2.600" height="3" rx=".6"/>
</g>
</svg>

<!-- right column -->
<div class="abs" style="left:582px;top:78px;width:1px;height:517px;background:#151515"></div>
<div class="hdr" style="left:583px;top:78px;width:341.500px"></div>
<span id="h5" class="ht" style="left:590px;top:80px">Navigator</span>
<span id="x5" class="hx" style="left:912px;top:80px">x</span>
<div class="white" style="left:583px;top:97px;width:341.500px;height:98px"></div>
<div class="abs" style="left:583px;top:195px;width:343px;height:2px;background:#111"></div>
<div class="white" style="left:583px;top:197px;width:343px;height:4px"></div>
<div class="hdr" style="left:583px;top:202px;width:341.500px"></div>
<span id="h6" class="ht" style="left:590px;top:204px">Map #2138387414 (Bar_fittings_NormalsMap.jpg)</span>
<span id="x6" class="hx" style="left:912px;top:204px">x</span>
<div class="white" style="left:583px;top:221px;width:341.500px;height:28px"></div>
<div class="dk" style="left:588px;top:225px;width:332px;height:19px"></div>
<div class="abs" style="left:583px;top:249px;width:342px;height:346px;background:#3a3a3a;border-top:1px solid #1a1a1a"></div>
<div class="abs" style="left:916px;top:250px;width:3px;height:344px;background:#444"></div>
<div class="abs" style="left:918.800px;top:250px;width:4.600px;height:344px;background:#383838"></div>
<div class="abs" style="left:918.800px;top:250px;width:4.600px;height:212px;background:#595959;border-radius:0 0 2px 2px;box-shadow:inset 1px 0 0 #4c4c4c"></div>
<div class="abs" style="left:923.400px;top:250px;width:1.500px;height:344px;background:#444"></div>
<div class="abs" style="left:924.500px;top:78px;width:1.200px;height:517px;background:#0c0c0c"></div>
<div class="abs" style="left:925.700px;top:78px;width:1.300px;height:517px;background:#4a4a4a"></div>
<div class="abs" style="left:927px;top:55px;width:1px;height:562px;background:#0c0c0c"></div>
<div class="roll" style="top:250px;height:197px"></div>
<div class="roll" style="top:451px;height:18px"></div>
<div class="roll" style="top:473px;height:125px"></div>
<span id="r1" class="rt" style="left:604px;top:253px">Coordinates</span>
<span id="r2" class="rt" style="left:604px;top:454px">Noise</span>
<span id="r3" class="rt" style="left:604px;top:476px">Bitmap Parameters</span>
<div class="tri" style="left:590.500px;top:258px;border-top:4.500px solid #c8c8c8;border-bottom:0"></div>
<div class="tri" style="left:592px;top:456.500px;border-left:4.500px solid #c8c8c8;border-right:0"></div>
<div class="tri" style="left:590.500px;top:480px;border-top:4.500px solid #c8c8c8;border-bottom:0"></div>
<div class="grip" style="top:256px"></div>
<div class="grip" style="top:457px"></div>
<div class="grip" style="top:479px"></div>

<div id="status" class="abs">
<div class="btn" style="left:1px;top:1px;height:20.500px"></div>
<div style="left:734px;top:2px;width:53px;height:19.500px;background:#686868"></div>
</div>
<span id="s1" class="st" style="font-size:10.500px;left:27px">RenderQueue: 2</span>
<span id="s2" class="st" style="font-size:10.500px;left:127px">Rendering "Map #2138387420</span>
<span id="s2b" class="st" style="font-size:10.500px;left:266px">( Normal Bump )" done</span>
<span id="s3" class="st" style="left:740px">29%</span>
<svg id="tbicons" style="left:0;top:0" width="928" height="624" viewBox="0 0 928 624">
<defs>
<pattern id="chkg" x="1" y="0" width="4" height="4" patternUnits="userSpaceOnUse"><rect width="4" height="4" fill="#0c0c0c"/><rect width="2" height="2" fill="#7c7c7c"/><rect x="2" y="2" width="2" height="2" fill="#7c7c7c"/></pattern>
<pattern id="chkd" x="0" y="1" width="4" height="4" patternUnits="userSpaceOnUse" patternTransform="rotate(45 217 66) translate(.2 .2) scale(.72)"><rect width="4" height="4" fill="#0c0c0c"/><rect width="2" height="2" fill="#6a6a6a"/><rect x="2" y="2" width="2" height="2" fill="#6a6a6a"/></pattern>
<clipPath id="c7"><circle cx="193.800" cy="65.800" r="4.800"/></clipPath>
</defs>
<!-- select arrow -->
<path d="M8.500 59.400v12.100l2.900-2.600 2.300 5.100 2.500-1.100-2.300-4.900h4.100z" fill="#ececf6" stroke="#0a1a3a" stroke-width="1.100" stroke-linejoin="round"/>
<!-- eyedropper -->
<g stroke-linecap="round" stroke-linejoin="round">
<path d="M36.300 72.200l1.400-3.700 7-7 2.300 2.300-7 7z" fill="#101010" stroke="#f6f6f6" stroke-width="1.500"/>
<path d="M43.800 61.300l3.400 3.400M45.300 61.300l2.700-2.700 1.900 1.900-2.700 2.700z" fill="#f6f6f6" stroke="#f6f6f6" stroke-width="2"/>
</g>
<!-- get material (disabled) -->
<g opacity="1"><circle cx="62" cy="62" r="3.6" fill="#0a0a0a" stroke="#141414" stroke-width="0.9"/><rect x="61" y="59" width="2" height="2" fill="#858585"/><rect x="61" y="63" width="2" height="2" fill="#858585"/><rect x="59" y="61" width="2" height="2" fill="#858585"/><rect x="63" y="61" width="2" height="2" fill="#858585"/></g>
<g transform="translate(58 58)">
<path d="M8.500 3.200c3.200.2 5 2.200 4.200 5.500" fill="none" stroke="#141414" stroke-width="1.500" stroke-dasharray="2.200 1"/>
<path d="M4.300 9.500h9.500l-4.300 6h-9.500zM2.200 12.500h9.500M9 9.500l-4.300 6" fill="#4e4e4e" stroke="#121212" stroke-width="1.300" stroke-linejoin="round"/>
</g>
<!-- assign (disabled) -->
<g opacity="1"><circle cx="84" cy="62" r="3.6" fill="#0a0a0a" stroke="#141414" stroke-width="0.9"/><rect x="83" y="59" width="2" height="2" fill="#858585"/><rect x="83" y="63" width="2" height="2" fill="#858585"/><rect x="81" y="61" width="2" height="2" fill="#858585"/><rect x="85" y="61" width="2" height="2" fill="#858585"/></g>
<g transform="translate(80 58)">
<path d="M9 2.500h4v4.200l2.800 2.600v6.200h-7.500v-6.200l2.700-2.600v-2.200h-2z" fill="#404040" stroke="#121212" stroke-width="1.300" stroke-linejoin="round"/>
<path d="M9 10.500l3 2 3-2v4.300h-6z" fill="#8c8c8c"/>
</g>
<!-- trash -->
<g>
<path d="M115.600 61.300c0-2.600 5-2.600 5 0" fill="none" stroke="#f6f6f6" stroke-width="1.200"/>
<rect x="112.600" y="61" width="10.800" height="1.400" fill="#f8f8f8"/>
<rect x="114" y="63" width="8.400" height="10.400" rx=".8" fill="#f8f8f8"/>
<path d="M115.900 64.400v7.700M118.200 64.400v7.700M120.500 64.400v7.700" stroke="#1a1a1a" stroke-width="1.100"/>
</g>
<!-- move children -->
<g>
<rect x="142.500" y="59.500" width="11.200" height="5" fill="#f2f0f6" stroke="#0a1a3a" stroke-width="1.100"/>
<path d="M145.800 65v3h7" fill="none" stroke="#0a1a3a" stroke-width="2.800"/>
<path d="M145.800 65v3h7" fill="none" stroke="#86dcd8" stroke-width="1"/>
<rect x="152.500" y="65.500" width="4.200" height="4.200" fill="#86dcd8" stroke="#0a1a3a" stroke-width="1"/>
<path d="M141.200 70.600h4.300v-1.900l4 3-4 3v-1.900h-4.300z" fill="#86dcd8" stroke="#0a1a3a" stroke-width="1" stroke-linejoin="round"/>
</g>
<!-- hide unused (disabled) -->
<g fill="#4c4c4c" stroke="#161616" stroke-width="1.100">
<path d="M168.300 63.200l3.700-3.800 3.700 3.800z" fill="#7a7a7a"/>
<rect x="167.500" y="64.500" width="9" height="8.500"/>
<circle cx="167.800" cy="68.800" r="2.400" fill="#6e6e6e"/>
</g>
<!-- bg in preview (disabled) -->
<rect x="186.500" y="58.500" width="14.700" height="14.700" fill="#0c0c0c" stroke="#161616"/>
<rect x="187.600" y="59.600" width="12.500" height="12.500" fill="none" stroke="#8a8a8a" stroke-width=".9"/>
<circle cx="193.800" cy="65.800" r="4.800" fill="#6c6c6c"/>
<g clip-path="url(#c7)" fill="#333"><rect x="190" y="62" width="2" height="2"/><rect x="194" y="62" width="2" height="2"/><rect x="192" y="64" width="2" height="2"/><rect x="196" y="64" width="2" height="2"/><rect x="190" y="66" width="2" height="2"/><rect x="194" y="66" width="2" height="2"/><rect x="192" y="68" width="2" height="2"/><rect x="196" y="68" width="2" height="2"/><rect x="192" y="60.500" width="2" height="1.500"/><rect x="188.500" y="64" width="1.500" height="2"/><rect x="194" y="70" width="2" height="1"/></g>
<!-- show map in viewport -->
<rect x="209" y="58" width="16" height="16" fill="#0a0a0a"/>
<g fill="#505050"><rect x="216" y="61" width="2" height="2"/><rect x="214" y="63" width="2" height="2"/><rect x="218" y="63" width="2" height="2"/><rect x="212" y="65" width="2" height="2"/><rect x="216" y="65" width="2" height="2"/><rect x="220" y="65" width="2" height="2"/><rect x="214" y="67" width="2" height="2"/><rect x="218" y="67" width="2" height="2"/><rect x="216" y="69" width="2" height="2"/></g>
<!-- material id 0 -->
<rect x="239.600" y="58.600" width="15.300" height="14.800" fill="#4a4a4a" stroke="#080808" stroke-width="1.300"/>
<text x="247.300" y="70.700" text-anchor="middle" font-family="Liberation Sans, sans-serif" font-weight="bold" font-size="13" fill="#050505" stroke="#050505" stroke-width=".6">0</text>
<path d="M253.800 76l4.400-4.400v4.400z" fill="#f4f4f4"/>
<!-- layout children -->
<g fill="#dedede" stroke="#141414" stroke-width=".8">
<rect x="274.800" y="59" width="5.600" height="5"/><rect x="274.800" y="68" width="5.600" height="5"/>
<circle cx="274.200" cy="61.400" r="1" fill="#fff"/><circle cx="274.200" cy="70.500" r="1" fill="#fff"/>
</g>
<path d="M275.500 59.700h3v3.600M275.500 68.700h3v3.600" fill="none" stroke="#fafafa" stroke-width="1.200"/>
<path d="M283.800 76l4.400-4.400v4.400z" fill="#f4f4f4"/>
<!-- layout all -->
<g fill="#f6f6f6" stroke="#141414" stroke-width=".7">
<rect x="294.600" y="63.200" width="3.800" height="4.200"/>
<rect x="302.600" y="58.800" width="2.800" height="5.600"/><rect x="302.600" y="67.600" width="2.800" height="5.600"/>
</g>
<path d="M302.500 60.500h-1.200c-.8 0-1.100.5-1.100 1.200v2.300c0 .8-.6 1.300-1.500 1.300.9 0 1.500.5 1.500 1.300v2.700c0 .8.300 1.200 1.100 1.200h1.200" fill="none" stroke="#f6f6f6" stroke-width="1.300"/>
<!-- parameter editor -->
<g opacity="1"><circle cx="327" cy="63" r="3.6" fill="#050505" stroke="#0a1a3a" stroke-width="1"/><rect x="326" y="60" width="2" height="2" fill="#fff"/><rect x="326" y="64" width="2" height="2" fill="#fff"/><rect x="324" y="62" width="2" height="2" fill="#fff"/><rect x="328" y="62" width="2" height="2" fill="#fff"/></g><g opacity="1"><circle cx="327" cy="71" r="3.6" fill="#050505" stroke="#0a1a3a" stroke-width="1"/><rect x="326" y="68" width="2" height="2" fill="#fff"/><rect x="326" y="72" width="2" height="2" fill="#fff"/><rect x="324" y="70" width="2" height="2" fill="#fff"/><rect x="328" y="70" width="2" height="2" fill="#fff"/></g>
<g stroke="#0a1a3a" stroke-width="1.100">
<rect x="332" y="61.600" width="6.600" height="3" rx="1" fill="#f8f8f8"/>
<rect x="332" y="69.600" width="6.600" height="3" rx="1" fill="#f8f8f8"/>
</g>
<!-- navigator -->
<g stroke="#0a1a3a" stroke-width="1.100">
<rect x="346.700" y="59.500" width="15.200" height="15" fill="#ececf4"/>
<path d="M346.700 63.700h15.200"/>
</g>
<rect x="347.300" y="60.100" width="14" height="3" fill="#fafafa"/>
<path d="M348.200 61.500h4" stroke="#0a1a3a" stroke-width="1.100" stroke-dasharray="1 .5"/>
<path d="M353.200 61.500h7" stroke="#c0c0d0" stroke-width=".8"/>
<g opacity="1"><circle cx="354.3" cy="69" r="3.5" fill="#050505" stroke="#0a1a3a" stroke-width="0.8"/><rect x="353.3" y="66" width="2" height="2" fill="#fff"/><rect x="353.3" y="70" width="2" height="2" fill="#fff"/><rect x="351.3" y="68" width="2" height="2" fill="#fff"/><rect x="355.3" y="68" width="2" height="2" fill="#fff"/></g>
<!-- select by material (disabled) -->
<circle cx="381" cy="64" r="5.600" fill="url(#chkg)" stroke="#161616" stroke-width=".8"/>
<path d="M385 65.500v7.200l1.800-1.600 1.500 3.100 1.500-.7-1.500-3h2.600z" fill="#7c7c7c" stroke="#1c1c1c" stroke-width=".9" stroke-linejoin="round"/>
</svg>
<svg id="sticons" style="left:0;top:0" width="928" height="624" viewBox="0 0 928 624">
<defs>
<g id="hand">
<path d="M-3.400 7V1.600M-1.500 7V.5M.6 7V1.500M2.600 7V2.800" fill="none" stroke-width="1.350" stroke-linecap="round"/>
<path d="M-4.100 6.300h7.400v3.200c0 2.200-.9 4-2.600 4.400h-3c-1.200-.3-2-1.200-2.800-2.300l-2.300-3.200c-.5-.9.500-1.600 1.300-.9l2 1.700z" stroke-width=".6" stroke-linejoin="round"/>
</g>
<path id="brk" d="M0 3.300v-3.300h3.300M11 0h3.300v3.300M14.300 10.700v3.300h-3.300M3.300 14h-3.300v-3.300" fill="none"/>
<g id="cube"><path d="M0-5.200l4.500 2.400v5.300l-4.500 2.700-4.500-2.700v-5.300z"/><path d="M-4.500-2.800l4.500 2.500 4.500-2.500M0-.3v5.500" fill="none"/></g>
</defs>
<!-- teapot -->
<g stroke="#0a1a3a" stroke-width="1" stroke-linejoin="round">
<path d="M5.500 604.500c1.500 0 2.500.7 3.200 1.500h9c2-1.600 3.600.2 3.200 2-.3 1.800-2.100 2.300-3 2.200-.6.900-1.200 1.500-1.800 2h-6.600c-1.400-1-2.700-3.500-4-7.700z" fill="#ecebe6"/>
<path d="M9.500 605.500c1-1.200 2.300-1.800 3.800-1.800s2.800.6 3.800 1.800" fill="#ecebe6"/>
<circle cx="13.300" cy="602.900" r=".9" fill="#ecebe6"/>
<path d="M18.300 606.800c1.300-.5 1.800.6 1.500 1.600s-1.100 1.200-1.700 1.100" fill="#5d8fd0"/>
</g>
<!-- dropdown arrow -->
<path d="M774.800 605h6.400l-3.200 4.200z" fill="#f4f4f4"/>
<!-- hand (pan) -->
<use href="#hand" x="802" y="598.800" fill="#1a1a1a" stroke="#1a1a1a" transform="translate(.6 .5)"/>
<use href="#hand" x="802" y="598.800" fill="#f1f1f1" stroke="#f1f1f1"/>
<!-- magnifier -->
<path d="M822 607.500l-5.200 4.900" stroke="#222" stroke-width="3.300" stroke-linecap="round"/>
<circle cx="825" cy="604.100" r="4.100" fill="none" stroke="#222" stroke-width="2.800"/>
<circle cx="825" cy="604.100" r="4.100" fill="none" stroke="#f4f4f4" stroke-width="1.600"/>
<path d="M822 607.500l-5.200 4.900" stroke="#f4f4f4" stroke-width="1.900" stroke-linecap="round"/>
<!-- zoom region -->
<rect x="839.600" y="599.900" width="12.800" height="8.300" fill="none" stroke="#222" stroke-width="2.400" stroke-dasharray="3 1" stroke-dashoffset="1.350"/>
<rect x="839.600" y="599.900" width="12.800" height="8.300" fill="none" stroke="#f4f4f4" stroke-width="1.400" stroke-dasharray="2.300 1.700" stroke-dashoffset="1"/>
<circle cx="845.400" cy="606.300" r="3.100" fill="#2c3c3a" stroke="#1c2a28" stroke-width="2.400"/>
<circle cx="845.400" cy="606.300" r="3.100" fill="none" stroke="#7fdccc" stroke-width="1.200"/>
<path d="M843.200 608.600l-3.900 3.900" stroke="#7fdccc" stroke-width="1.500" stroke-linecap="round"/>
<!-- zoom extents -->
<use href="#brk" x="861.900" y="598.900" stroke="#151515" stroke-width="2.600"/>
<use href="#brk" x="861.900" y="598.900" stroke="#f6f6f6" stroke-width="1.500"/>
<use href="#cube" x="868.900" y="606" fill="#f2f2f2" stroke="#151515" stroke-width=".9" stroke-linejoin="round"/>
<!-- zoom extents selected -->
<use href="#brk" x="884.900" y="598.900" stroke="#151515" stroke-width="2.600"/>
<use href="#brk" x="884.900" y="598.900" stroke="#f6f6f6" stroke-width="1.500"/>
<use href="#cube" x="891.700" y="606" fill="#62d2d2" stroke="#0c3434" stroke-width=".9" stroke-linejoin="round"/>
<!-- pan to selected -->
<use href="#hand" x="916" y="599.200" fill="#0c3030" stroke="#0c3030" transform="translate(.5 .4)"/>
<use href="#hand" x="916" y="599.200" fill="#5ccfc4" stroke="#5ccfc4"/>
<use href="#brk" x="907.900" y="598.900" stroke="#151515" stroke-width="2.600"/>
<use href="#brk" x="907.900" y="598.900" stroke="#f6f6f6" stroke-width="1.500"/>
</svg>

<div id="botstrip" class="abs"><svg style="left:0;top:0" width="928" height="7" viewBox="0 0 928 7">
<rect x="0" y="0" width="928" height="1.200" fill="#1c1c1c"/>
<rect x="5" y="1.500" width="1.200" height="5.500" fill="#4c4c4c"/>
<rect x="32" y="1.500" width="1.200" height="5.500" fill="#4c4c4c"/>
<rect x="70.9" y="1.500" width="1.200" height="5.500" fill="#4c4c4c"/>
<rect x="109.8" y="1.500" width="1.200" height="5.500" fill="#4c4c4c"/>
<rect x="148.7" y="1.500" width="1.200" height="5.500" fill="#4c4c4c"/>
<rect x="187.6" y="1.500" width="1.200" height="5.500" fill="#4c4c4c"/>
<rect x="226.5" y="1.500" width="1.200" height="5.500" fill="#4c4c4c"/>
<rect x="265.4" y="1.500" width="1.200" height="5.500" fill="#4c4c4c"/>
<rect x="304.3" y="1.500" width="1.200" height="5.500" fill="#4c4c4c"/>
<rect x="343.2" y="1.500" width="1.200" height="5.500" fill="#4c4c4c"/>
<rect x="382.1" y="1.500" width="1.200" height="5.500" fill="#4c4c4c"/>
<rect x="421" y="1.500" width="1.200" height="5.500" fill="#4c4c4c"/>
<rect x="459.9" y="1.500" width="1.200" height="5.500" fill="#4c4c4c"/>
<rect x="478.5" y="1.500" width="1.200" height="5.500" fill="#4c4c4c"/>
<rect x="502.5" y="1.500" width="1.200" height="5.500" fill="#4c4c4c"/>
<rect x="519.5" y="1.500" width="1.200" height="5.500" fill="#4c4c4c"/>
<rect x="528.5" y="1.500" width="1.200" height="5.500" fill="#4c4c4c"/>
<rect x="541" y="1.500" width="1.200" height="5.500" fill="#4c4c4c"/>
<rect x="580.5" y="1.500" width="1.200" height="5.500" fill="#4c4c4c"/>
<rect x="618.5" y="1.500" width="1.200" height="5.500" fill="#4c4c4c"/>
<rect x="657.5" y="1.500" width="1.200" height="5.500" fill="#4c4c4c"/>
<rect x="696.5" y="1.500" width="1.200" height="5.500" fill="#4c4c4c"/>
<rect x="735.5" y="1.500" width="1.200" height="5.500" fill="#4c4c4c"/>
<rect x="775.5" y="1.500" width="1.200" height="5.500" fill="#4c4c4c"/>
<rect x="815.5" y="1.500" width="1.200" height="5.500" fill="#4c4c4c"/>
<rect x="880.5" y="1.500" width="1.200" height="5.500" fill="#4c4c4c"/>
<rect x="919.5" y="1.500" width="1.200" height="5.500" fill="#4c4c4c"/>
<rect x="822" y="1" width="19.500" height="6" fill="#6a6580"/>
<rect x="0" y="1" width="5" height="6" fill="#222"/>
</svg>
<span style="left:477px;top:4.500px;font-size:9px;line-height:9px;font-weight:bold;color:#e8e8a0;white-space:nowrap">00:25</span></div>
</body></html>
